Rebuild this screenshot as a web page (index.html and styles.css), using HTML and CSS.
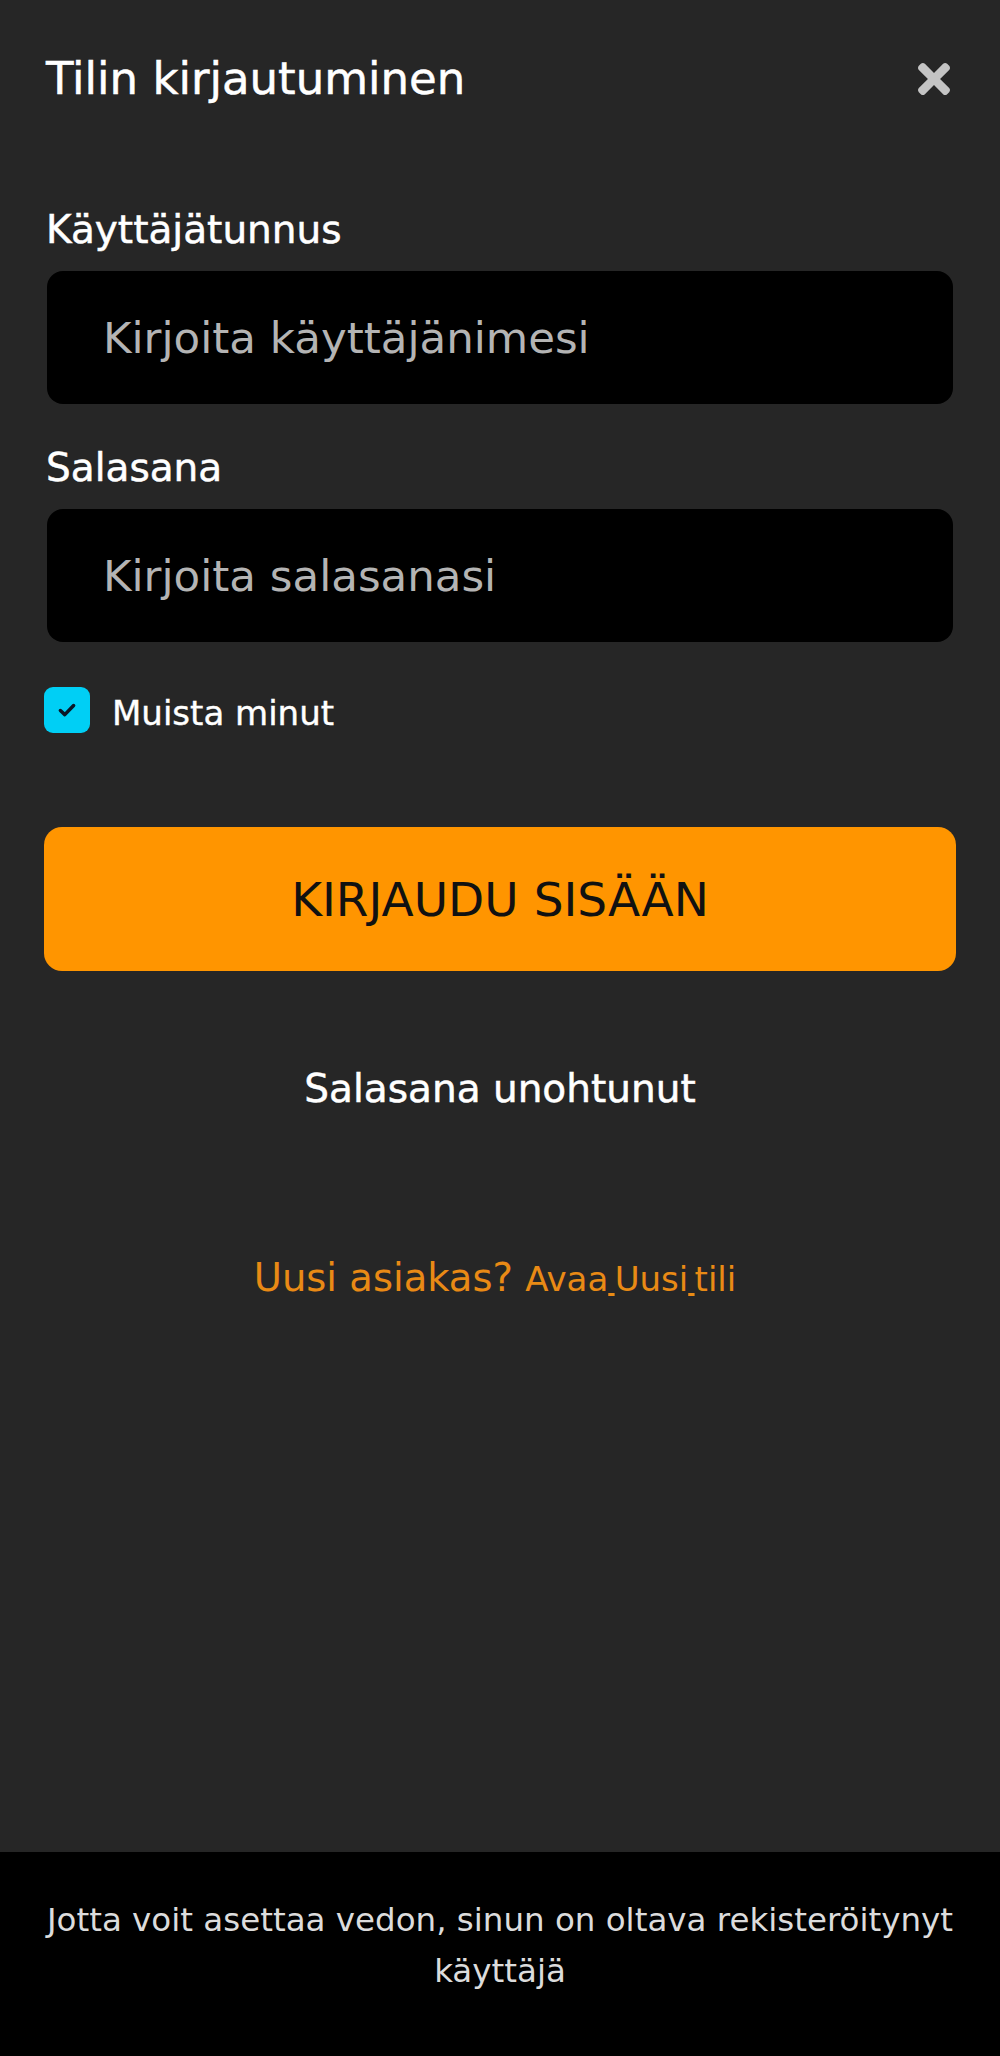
FILE: index.html
```html
<!DOCTYPE html>
<html lang="fi">
<head>
<meta charset="utf-8">
<title>Tilin kirjautuminen</title>
<link rel="stylesheet" href="styles.css">
</head>
<body>
<div class="page">
  <main class="panel">
    <header class="head">
      <h1 class="title">Tilin kirjautuminen</h1>
      <button class="close" type="button" aria-label="Sulje">
        <svg viewBox="0 80 352 352" width="32" height="32" aria-hidden="true">
          <path fill="currentColor" d="M242.72 256l100.07-100.07c12.28-12.28 12.28-32.19 0-44.480l-22.24-22.24c-12.28-12.28-32.19-12.28-44.48 0L176 189.28 75.93 89.21c-12.280-12.28-32.19-12.28-44.48 0L9.21 111.45c-12.28 12.28-12.28 32.19 0 44.48L109.28 256 9.21 356.07c-12.28 12.28-12.28 32.19 0 44.48l22.24 22.24c12.28 12.28 32.2 12.28 44.48 0L176 322.72l100.07 100.07c12.28 12.28 32.2 12.28 44.48 0l22.24-22.24c12.28-12.28 12.28-32.19 0-44.48L242.72 256z"/>
        </svg>
      </button>
    </header>
    <form class="form">
      <label class="label" for="user">Käyttäjätunnus</label>
      <div class="field"><input id="user" class="input" type="text" placeholder="Kirjoita käyttäjänimesi"></div>
      <label class="label label-second" for="pass">Salasana</label>
      <div class="field"><input id="pass" class="input" type="password" placeholder="Kirjoita salasanasi"></div>
      <div class="remember">
        <span class="check">
          <svg viewBox="0 0 20 20" width="22" height="22" aria-hidden="true">
            <polyline points="4,10.5 8,14.2 16,6" fill="none" stroke="#0b1626" stroke-width="3.2" stroke-linecap="round" stroke-linejoin="round"/>
          </svg>
        </span>
        <span class="remember-text">Muista minut</span>
      </div>
      <button class="submit" type="button">KIRJAUDU SISÄÄN</button>
    </form>
    <p class="forgot">Salasana unohtunut</p>
    <p class="newcust">Uusi asiakas? <a class="link" href="#">Avaa<span class="gap"> </span>Uusi<span class="gap"> </span>tili</a></p>
  </main>
  <footer class="foot">Jotta voit asettaa vedon, sinun on oltava rekisteröitynyt käyttäjä</footer>
</div>
</body>
</html>
```
FILE: styles.css
```css
html, body {
  margin: 0;
  padding: 0;
  background: #262626;
}
body {
  font-family: "DejaVu Sans", "Liberation Sans", sans-serif;
  color: #ffffff;
}
.page {
  min-height: 100vh;
  display: flex;
  flex-direction: column;
}
.panel {
  flex: 1;
  padding: 0 44px;
  box-sizing: border-box;
}
.head {
  display: flex;
  align-items: center;
  justify-content: space-between;
  padding-top: 52px;
  height: 54px;
}
.title {
  margin: 0 0 0 2px;
  font-size: 45px;
  font-weight: normal;
  line-height: 54px;
  color: #ffffff;
  -webkit-text-stroke: 0.5px #ffffff;
}
.close {
  background: none;
  border: 0;
  padding: 0;
  margin-right: 6px;
  width: 32px;
  height: 32px;
  color: #c4c4c4;
  display: flex;
  align-items: center;
  justify-content: center;
}
.form {
  margin: 100px 0 0;
  display: flex;
  flex-direction: column;
}
.label {
  display: block;
  font-size: 39px;
  line-height: 47px;
  margin: 0 0 18px 2px;
  color: #ffffff;
  -webkit-text-stroke: 0.5px #ffffff;
}
.label-second {
  margin-top: 40px;
}
.field {
  padding: 0 3px;
}
.input {
  display: block;
  width: 100%;
  box-sizing: border-box;
  height: 133px;
  background: #000000;
  border: 0;
  border-radius: 16px;
  padding: 0 0 0 56px;
  font-family: "DejaVu Sans", "Liberation Sans", sans-serif;
  font-size: 43.5px;
  color: #ffffff;
  outline: none;
}
.input::placeholder {
  color: #b4b4b4;
  opacity: 1;
}
.remember {
  display: flex;
  align-items: center;
  margin-top: 45px;
  height: 46px;
}
.check {
  width: 46px;
  height: 46px;
  border-radius: 9px;
  background: #00cff5;
  display: flex;
  align-items: center;
  justify-content: center;
}
.remember-text {
  margin-left: 22px;
  padding-top: 6px;
  font-size: 34px;
  line-height: 40px;
  color: #ffffff;
  -webkit-text-stroke: 0.4px #ffffff;
}
.submit {
  margin-top: 94px;
  height: 144px;
  width: 100%;
  border: 0;
  border-radius: 18px;
  background: #ff9500;
  color: #111111;
  font-family: "DejaVu Sans", "Liberation Sans", sans-serif;
  font-size: 47px;
  padding: 0;
}
.forgot {
  margin: 94px 0 0;
  text-align: center;
  font-size: 39px;
  line-height: 47px;
  color: #ffffff;
  -webkit-text-stroke: 0.5px #ffffff;
}
.newcust {
  margin: 142px 0 0;
  text-align: center;
  font-size: 38.5px;
  line-height: 47px;
  color: #e98a15;
  padding-right: 10px;
}
.link {
  color: #e98a15;
  font-size: 34px;
  text-decoration: none;
}
.gap {
  font-size: 20px;
  text-decoration: underline;
  text-decoration-thickness: 3px;
}
.foot {
  background: #000000;
  color: #dcdcdc;
  text-align: center;
  font-size: 32.5px;
  line-height: 51px;
  padding: 43px 30px 59px;
  height: 102px;
}
```
